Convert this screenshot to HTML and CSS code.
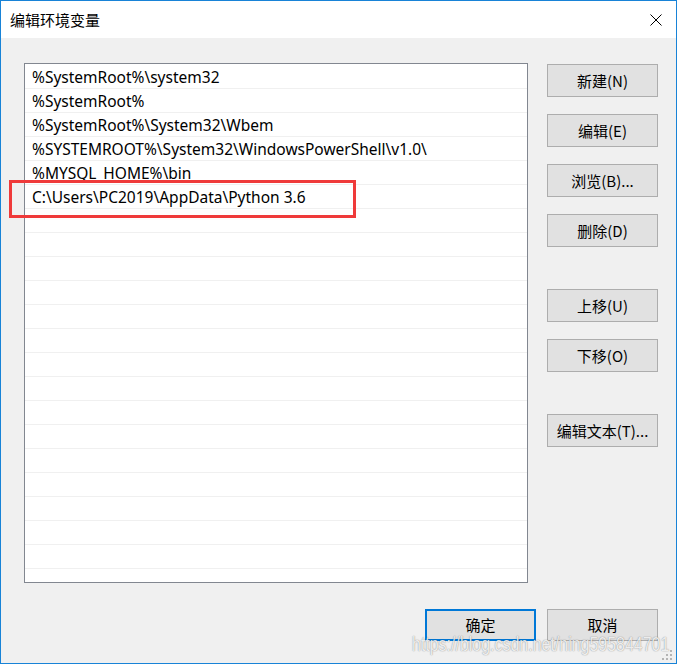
FILE: index.html
```html
<!DOCTYPE html>
<html lang="zh">
<head>
<meta charset="utf-8">
<title>编辑环境变量</title>
<link rel="stylesheet" href="styles.css">
</head>
<body>
<div class="window">
  <div class="titlebar">
    <span class="title">编辑环境变量</span>
    <span class="close">
      <svg width="12" height="12" viewBox="0 0 12 12"><path d="M0.5 0.5 L11.5 11.5 M11.5 0.5 L0.5 11.5" stroke="#000" stroke-width="1" fill="none"/></svg>
    </span>
  </div>
  <div class="content">
    <div class="main">
      <div class="list">
        <div class="row">%SystemRoot%\system32</div>
        <div class="row">%SystemRoot%</div>
        <div class="row">%SystemRoot%\System32\Wbem</div>
        <div class="row">%SYSTEMROOT%\System32\WindowsPowerShell\v1.0\</div>
        <div class="row">%MYSQL_HOME%\bin</div>
        <div class="row">C:\Users\PC2019\AppData\Python 3.6</div>
        <div class="row"></div>
        <div class="row"></div>
        <div class="row"></div>
        <div class="row"></div>
        <div class="row"></div>
        <div class="row"></div>
        <div class="row"></div>
        <div class="row"></div>
        <div class="row"></div>
        <div class="row"></div>
        <div class="row"></div>
        <div class="row"></div>
        <div class="row"></div>
        <div class="row"></div>
        <div class="row"></div>
        <div class="row"></div>
      </div>
      <div class="side">
        <button class="btn">新建(N)</button>
        <button class="btn">编辑(E)</button>
        <button class="btn">浏览(B)...</button>
        <button class="btn">删除(D)</button>
        <button class="btn group">上移(U)</button>
        <button class="btn">下移(O)</button>
        <button class="btn group">编辑文本(T)...</button>
      </div>
    </div>
    <div class="footer">
      <button class="btn wide default">确定</button>
      <button class="btn wide">取消</button>
    </div>
  </div>
  <div class="highlight"></div>
  <div class="watermark">https://blog.csdn.net/ning595844701</div>
  <svg class="grip" width="12" height="12" viewBox="0 0 12 12">
    <rect x="8" y="0" width="2" height="2" fill="#b4b4b4"/>
    <rect x="4" y="4" width="2" height="2" fill="#b4b4b4"/>
    <rect x="8" y="4" width="2" height="2" fill="#b4b4b4"/>
    <rect x="0" y="8" width="2" height="2" fill="#b4b4b4"/>
    <rect x="4" y="8" width="2" height="2" fill="#b4b4b4"/>
    <rect x="8" y="8" width="2" height="2" fill="#b4b4b4"/>
  </svg>
</div>
</body>
</html>
```

FILE: styles.css
```css
* { box-sizing: border-box; }
html, body { margin: 0; padding: 0; background: #f0f0f0; }
.window {
  position: relative;
  width: 677px;
  height: 664px;
  border: 1px solid #1883d7;
  background: #f0f0f0;
  display: flex;
  flex-direction: column;
  overflow: hidden;
  font-family: "Noto Sans CJK SC", "Noto Sans", sans-serif;
}
.titlebar {
  height: 37px;
  background: #fff;
  display: flex;
  align-items: center;
  justify-content: space-between;
  padding: 0 14px 0 9px;
  flex: none;
}
.title {
  font-size: 15px;
  color: #000;
  line-height: 20px;
  margin-top: 1px;
}
.close { display: flex; margin-top: 1px; }
.content {
  flex: 1;
  padding: 25px 18px 0 23px;
  display: flex;
  flex-direction: column;
}
.main { display: flex; gap: 19px; }
.list {
  width: 504px;
  height: 520px;
  border: 1px solid #828790;
  background: #fff;
  padding-top: 1px;
  overflow: hidden;
  flex: none;
}
.row {
  height: 24px;
  border-bottom: 1px solid #f0f0f0;
  padding: 1px 0 0 7px;
  font-family: "Noto Sans", "Open Sans", sans-serif;
  font-size: 15.5px;
  line-height: 23px;
  color: #000;
  white-space: nowrap;
}
.side {
  display: flex;
  flex-direction: column;
  padding-top: 1px;
  gap: 17px;
}
.btn {
  width: 111px;
  height: 33px;
  background: #e1e1e1;
  border: 1px solid #adadad;
  font-family: "Noto Sans CJK SC", "Noto Sans", sans-serif;
  font-size: 15px;
  color: #000;
  padding: 0;
  margin: 0;
  line-height: 20px;
}
.btn.group { margin-top: 25px; }
.footer {
  display: flex;
  justify-content: flex-end;
  gap: 11px;
  margin-top: 26px;
}
.btn.wide { height: 32px; }
.btn.default { border: 2px solid #0078d7; }
.highlight {
  position: absolute;
  left: 8px;
  top: 179px;
  width: 347px;
  height: 38px;
  border: 3px solid #ef3a3a;
}
.watermark {
  position: absolute;
  left: 411px;
  top: 629px;
  font-family: "Liberation Sans", Arial, sans-serif;
  font-size: 21px;
  line-height: 28px;
  color: rgba(255, 255, 255, 0.85);
  text-shadow: 0 0 1px rgba(0, 0, 0, 0.35), 0 0 2px rgba(0, 0, 0, 0.2);
  transform: scaleX(0.76);
  transform-origin: left center;
  white-space: nowrap;
  letter-spacing: 0;
}
.grip {
  position: absolute;
  right: 2px;
  bottom: 1px;
}
```
